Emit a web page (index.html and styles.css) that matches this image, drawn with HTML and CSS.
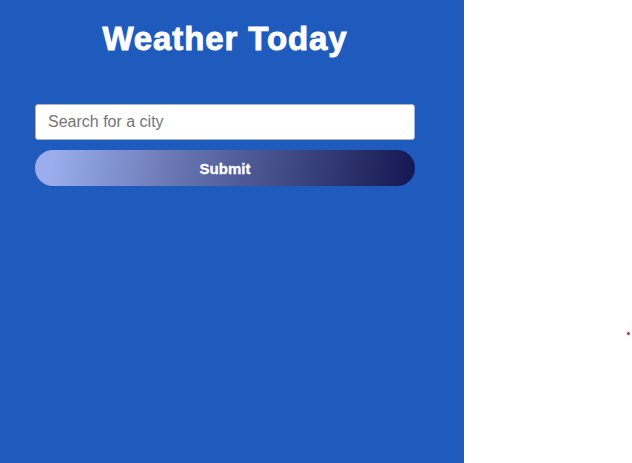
FILE: index.html
```html
<!DOCTYPE html>
<html>
<head>
<meta charset="utf-8">
<link rel="stylesheet" href="styles.css">
</head>
<body>
<div class="page">
  <main class="panel">
    <h1 class="title">Weather Today</h1>
    <form class="search">
      <input class="city" type="text" placeholder="Search for a city">
      <button class="submit" type="button">Submit</button>
    </form>
  </main>
  <div class="side"><span class="dot"></span></div>
</div>
</body>
</html>
```
FILE: styles.css
```css
html, body {
  margin: 0;
  padding: 0;
  height: 100%;
  background: #ffffff;
  font-family: "Liberation Sans", Arial, sans-serif;
}
.page {
  display: flex;
  height: 100%;
}
.panel {
  width: 464px;
  background: #1f5bbd;
  box-sizing: border-box;
  padding: 20px 49px 0 35px;
}
.title {
  margin: 0;
  font-size: 33px;
  line-height: 38px;
  font-weight: 900;
  color: #ffffff;
  text-align: center;
  letter-spacing: 0.9px;
  -webkit-text-stroke: 0.9px #ffffff;
}
.search {
  margin-top: 46px;
  display: flex;
  flex-direction: column;
  gap: 10px;
}
.city {
  height: 36px;
  box-sizing: border-box;
  border: 1px solid #a9b4c6;
  border-radius: 3px;
  padding: 0 12px;
  font-family: "Liberation Sans", Arial, sans-serif;
  font-size: 16px;
  color: #333;
  background: #fff;
  outline: none;
}
.city::placeholder {
  color: #757575;
}
.submit {
  height: 36px;
  border: none;
  border-radius: 18px;
  background: linear-gradient(100deg, #9badec 5%, #5c6aa6 45%, #141650 100%);
  color: #ffffff;
  font-family: "Liberation Sans", Arial, sans-serif;
  font-size: 15px;
  font-weight: bold;
  -webkit-text-stroke: 0.3px #ffffff;
  cursor: pointer;
}
.side {
  flex: 1;
  position: relative;
}
.dot {
  position: absolute;
  left: 163px;
  top: 332px;
  width: 3px;
  height: 3px;
  border-radius: 50%;
  background: #e02020;
}
```
